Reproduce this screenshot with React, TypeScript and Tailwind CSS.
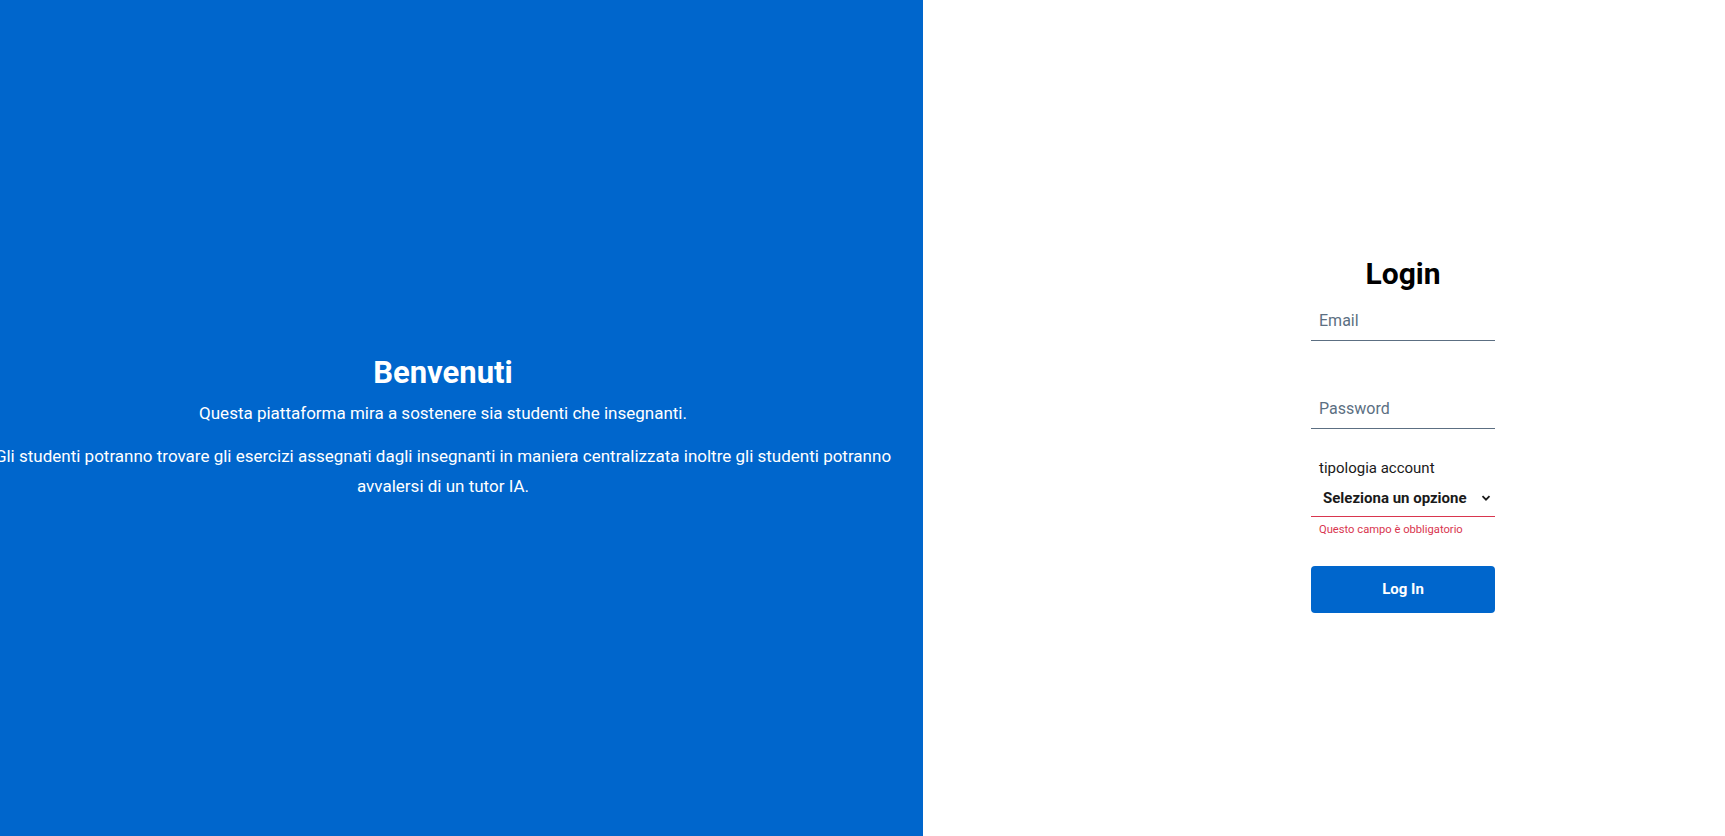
import React from "react";

const FONT = "font-['Roboto','Liberation_Sans',sans-serif]";

const Welcome = () => (
  <div className="flex h-full w-[923px] shrink-0 flex-col items-start bg-[#0066cc] pt-[352px] text-white">
    <div className="flex w-[886px] flex-col items-center">
      <h1 className="text-[31px] font-bold leading-[42px]">Benvenuti</h1>
      <p className="mt-[5px] text-[17px] leading-[28px]">
        Questa piattaforma mira a sostenere sia studenti che insegnanti.
      </p>
      <p className="mt-[14px] w-[906px] shrink-0 text-center text-[17px] leading-[30px]">
        Gli studenti potranno trovare gli esercizi assegnati dagli insegnanti in maniera centralizzata inoltre gli studenti potranno avvalersi di un tutor IA.
      </p>
    </div>
  </div>
);

const LoginForm = () => (
  <div className="flex w-[184px] flex-col">
    <h2 className="text-center text-[30px] font-bold leading-[40px] text-black">Login</h2>
    <div className="mt-[13px] border-b border-[#5c6f82] px-2 pb-[7px] pt-[2px]">
      <input
        placeholder="Email"
        className="w-full bg-transparent text-[16px] leading-[22px] text-[#17324d] outline-none placeholder:text-[#5c6f82]"
      />
    </div>
    <div className="mt-[54px] border-b border-[#5c6f82] px-2 pb-[7px] pt-[2px]">
      <input
        type="password"
        placeholder="Password"
        className="w-full bg-transparent text-[16px] leading-[22px] text-[#17324d] outline-none placeholder:text-[#5c6f82]"
      />
    </div>
    <label className="mt-[29px] px-2 text-[15px] leading-[20px] text-[#1a1a1a]">tipologia account</label>
    <div className="mt-[9px] flex items-center justify-between border-b border-[#d9364f] pb-[7px] pl-[12px] pr-[4px]">
      <span className="text-[15px] font-bold leading-[22px] text-[#1a1a1a]">Seleziona un opzione</span>
      <svg width="10" height="10" viewBox="0 0 10 10" className="text-[#1a1a1a]">
        <path d="M1.5 3.2 L5 6.7 L8.5 3.2" fill="none" stroke="currentColor" strokeWidth="1.8" />
      </svg>
    </div>
    <p className="mt-[5px] px-2 text-[11.2px] leading-[16px] text-[#d9364f]">Questo campo è obbligatorio</p>
    <button className="mt-[28px] h-[47px] w-full rounded-[4px] bg-[#0066cc] text-[15px] font-bold text-white">
      Log In
    </button>
  </div>
);

export default function App() {
  return (
    <div className={`flex h-[836px] w-full overflow-hidden bg-white ${FONT}`}>
      <Welcome />
      <div className="flex flex-1 pl-[388px] pt-[254px]">
        <LoginForm />
      </div>
    </div>
  );
}
